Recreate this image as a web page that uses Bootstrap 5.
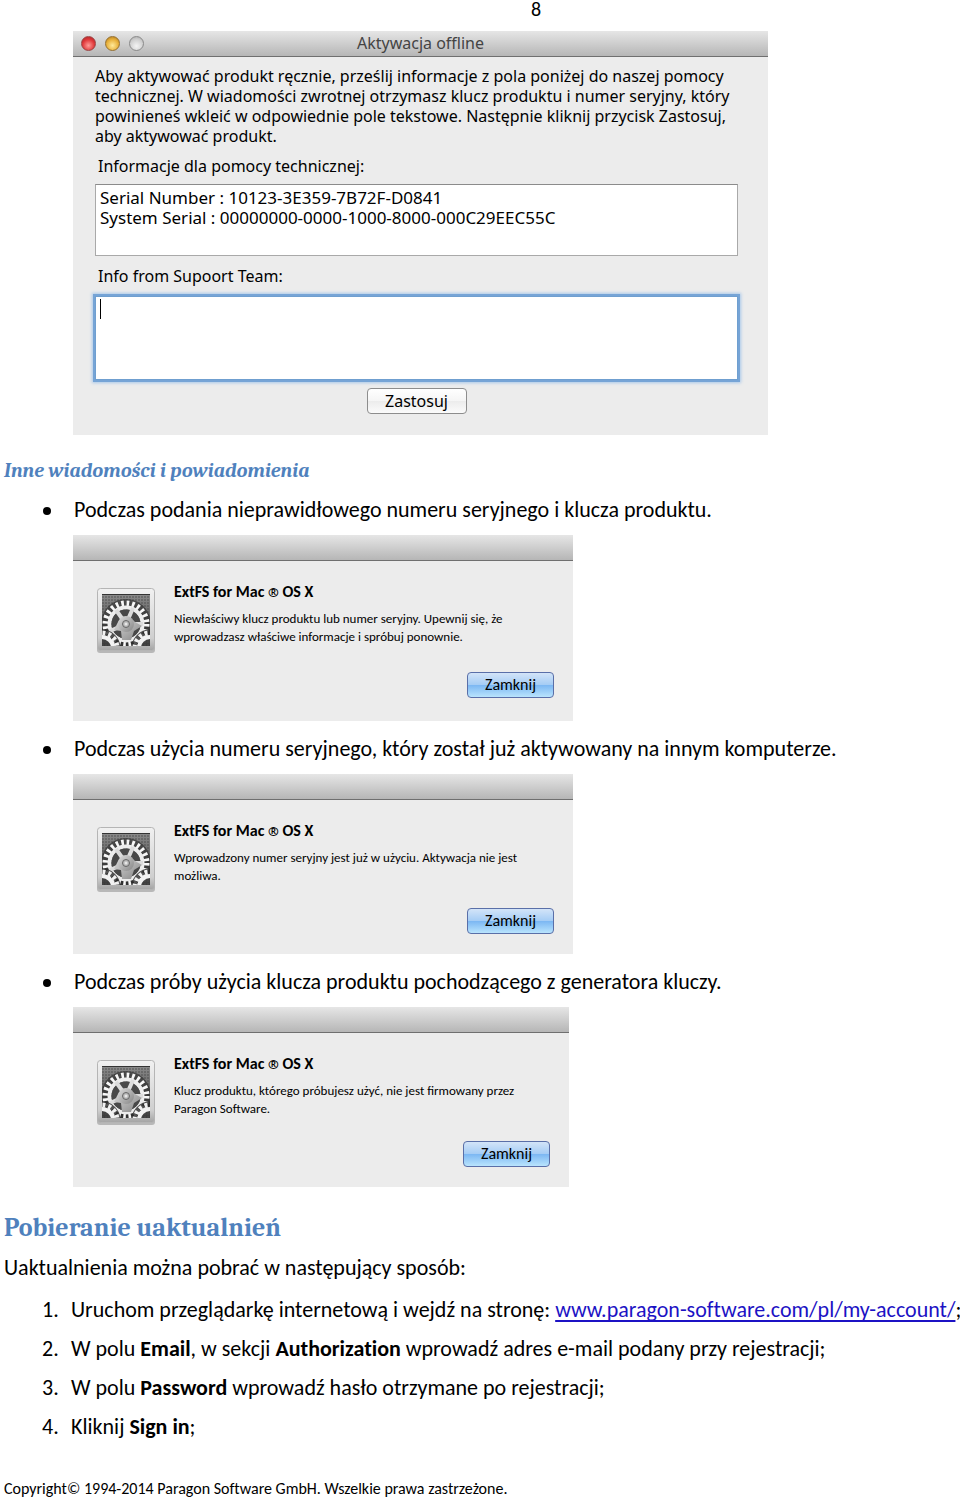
<!DOCTYPE html>
<html lang="pl">
<head>
<meta charset="utf-8">
<meta name="viewport" content="width=device-width, initial-scale=1">
<title>Aktywacja offline</title>
<link href="https://cdn.jsdelivr.net/npm/bootstrap@5.3.0/dist/css/bootstrap.min.css" rel="stylesheet">
<style>
  body { font-family: Carlito, Calibri, Lato, sans-serif; font-size: 22px; line-height: 26px; color: #000; background: #fff; font-variant-ligatures: none; }
  h2, h3 { font-family: Caladea, Cambria, "Liberation Serif", serif; font-weight: 700; color: #4f81bd; }
  h2 { font-size: 26px; line-height: 32px; margin: 25px 0 11px; }
  h3 { font-size: 20px; line-height: 24px; font-style: italic; margin: 24px 0 14px; }
  .page-number { padding: 0 0 13px 108px; font-size: 20px; line-height: 18px; }
  .indent { padding-left: 69px; }

  /* Numbered and bulleted lists share one hanging marker column */
  .steps { list-style: none; padding: 0 0 0 38px; margin: 0; counter-reset: step; }
  .steps > li { display: flex; }
  ol.steps > li { counter-increment: step; margin-bottom: 13px; white-space: nowrap; }
  ol.steps > li::before { content: counter(step) "."; flex: 0 0 29px; }
  ul.steps + .indent { padding-top: 12px; }
  .indent + ul.steps { padding-top: 15px; }
  ul.steps > li::before { content: ""; flex: 0 0 8px; height: 8px; margin: 10px 23px 0 1px; border-radius: 50%; background: #000; }
  a { color: #1c12c4; text-underline-offset: 3px; text-decoration-skip-ink: none; }

  .mac-window { background: #ececec; font-variant-ligatures: normal; }
  .mac-title { height: 26px; background: linear-gradient(#e6e6e6, #b6b6b6); border-bottom: 1px solid #6f6f6f; color: #444; font-size: 16px; line-height: 25px; }
  .activation { max-width: 695px; font-family: "Noto Sans", "Open Sans", sans-serif; font-size: 16px; line-height: 20px; }
  .activation .mac-body { padding: 9px 30px 21px 22px; }
  .activation label { display: block; padding: 2px 0 0 3px; margin-bottom: 8px; }
  .lights { position: absolute; left: 8px; top: 5px; gap: 9px; }
  .light { width: 15px; height: 15px; border-radius: 50%; border: 1px solid #8a8a8a; }
  .light-red { background: radial-gradient(circle at 50% 65%, #ff9c98, #e0393b 55%, #a51f22); border-color: #9d4444; }
  .light-yellow { background: radial-gradient(circle at 50% 65%, #ffe99a, #e8b13c 55%, #a87318); border-color: #96702f; }
  .light-gray { background: radial-gradient(circle at 50% 70%, #f4f4f4, #cfcfcf 60%, #a5a5a5); }
  .mac-field { display: block; width: 100%; height: 72px; resize: none; border: 1px solid #a9a9a9; border-top-color: #8b8b8b; border-radius: 0; padding: 3px 4px; background: #fff; color: #000; outline: 0; overflow: hidden; line-height: 20px; font-size: 17px; }
  .mac-field.active { height: 84px; border: 1px solid #6f9fd0; box-shadow: 0 0 0 2px #76a4d6, 0 0 3px 3px #a9c8ea; }
  .reply-box { margin: 10px 0 8px; }
  .caret { position: absolute; left: 5px; top: 3px; width: 1px; height: 20px; background: #000; }
  .mac-btn { border: 1px solid #8d8d8d; border-radius: 4px; padding: 0; height: 26px; line-height: 22px; font-size: 16px; color: #000; background: linear-gradient(#fff, #f5f5f5 50%, #ececec 51%, #fbfbfb); min-width: 100px; vertical-align: top; }
  .mac-btn.blue { min-width: 87px; border-color: #5a6fa8; background: linear-gradient(#d3e4f8, #a6cdf5 48%, #7db8f3 52%, #b9e4fd); }

  .notice { max-width: 500px; font-size: 13px; line-height: 18px; }
  .notice.narrow { max-width: 496px; }
  .notice .mac-body { padding: 21px 19px 23px 23px; }
  .notice strong { display: block; font-size: 16px; line-height: 20px; margin-bottom: 8px; }
  .notice .reg { font-family: "Noto Sans", sans-serif; font-size: 13px; }
  .notice .icon { width: 60px; height: 68px; margin: 5px 18px 0 0; flex: none; }
  .notice .actions { margin-top: 17px; }
  .notice.short .mac-body { padding-bottom: 20px; }
  .notice.short .actions { margin-top: 14px; }
  footer { font-size: 16px; line-height: 18px; margin-top: 40px; }
</style>
</head>
<body>
<svg width="0" height="0" class="position-absolute" aria-hidden="true">
  <defs>
    <linearGradient id="frame" x1="0" y1="0" x2="0" y2="1"><stop offset="0" stop-color="#f1f1f1"/><stop offset=".8" stop-color="#cfcfcf"/><stop offset="1" stop-color="#a4a4a4"/></linearGradient>
    <linearGradient id="hub" x1="0" y1="0" x2="1" y2="1"><stop offset="0" stop-color="#dedede"/><stop offset="1" stop-color="#858585"/></linearGradient>
    <linearGradient id="back" x1="0" y1="0" x2="0" y2="1"><stop offset="0" stop-color="#8a8a8a"/><stop offset="1" stop-color="#3a3a3a"/></linearGradient>
    <pattern id="mesh" width="3" height="3" patternUnits="userSpaceOnUse"><circle cx="1" cy="1" r=".8" fill="#4a4a4a"/></pattern>
    <clipPath id="inside"><rect x="6" y="7" width="48" height="52"/></clipPath>
    <symbol id="gears" viewBox="0 0 60 68">
      <rect x="1" y="3" width="58" height="63" rx="3" fill="#b8b8b8"/>
      <rect x="1.500" y="1.500" width="57" height="62" rx="3" fill="url(#frame)" stroke="#b5b5b5"/>
      <rect x="6" y="7" width="48" height="52" fill="url(#back)"/>
      <rect x="6" y="7" width="48" height="52" fill="url(#mesh)"/>
      <path d="M6 7.500H54" stroke="#333"/>
      <g clip-path="url(#inside)" fill="none">
        <circle cx="30" cy="37" r="20" stroke="#2a2a2a" stroke-width="10" opacity=".6"/>
        <circle cx="30" cy="37" r="20.500" stroke="#f8f8f8" stroke-width="6" stroke-dasharray="2.600 2.767"/>
        <circle cx="30" cy="37" r="16.500" stroke="#ededed" stroke-width="4"/>
        <circle cx="30" cy="37" r="14.500" fill="#484848"/>
        <circle cx="30" cy="37" r="14.500" fill="url(#mesh)"/>
        <g stroke="#dcdcdc" stroke-width="4">
          <path d="M30 37L20 23M30 37L37 21M30 37L47 37M30 37L14 44"/>
        </g>
        <path d="M22 35Q30 25 39 35L46 39L38 44L35 53H26L25 44L18 43Z" fill="url(#hub)"/>
        <g stroke="#f2f2f2">
          <circle cx="6" cy="61" r="16" stroke="#2a2a2a" stroke-width="5" opacity=".8"/>
          <circle cx="54" cy="61" r="16" stroke="#2a2a2a" stroke-width="5" opacity=".8"/>
          <circle cx="6" cy="61" r="15" stroke-width="5" stroke-dasharray="2.900 2.990"/>
          <circle cx="6" cy="61" r="11" stroke-width="4"/>
          <circle cx="54" cy="61" r="15" stroke-width="5" stroke-dasharray="2.900 2.990"/>
          <circle cx="54" cy="61" r="11" stroke-width="4"/>
        </g>
        <circle cx="30" cy="37" r="8" fill="url(#hub)"/>
        <circle cx="30" cy="37" r="3.500" fill="#b8b8b8" stroke="#666"/>
        <circle cx="30" cy="37" r="1.500" fill="#e6e6e6"/>
      </g>
    </symbol>
  </defs>
</svg>

<main class="container-fluid ps-1 pe-0">
  <div class="page-number text-center">8</div>

  <div class="indent">
    <section class="mac-window activation">
      <div class="mac-title position-relative text-center">
        <div class="lights d-flex"><span class="light light-red"></span><span class="light light-yellow"></span><span class="light light-gray"></span></div>
        Aktywacja offline
      </div>
      <div class="mac-body">
        <p class="mb-2">Aby aktywować produkt ręcznie, prześlij informacje z pola poniżej do naszej pomocy<br>technicznej. W wiadomości zwrotnej otrzymasz klucz produktu i numer seryjny, który<br>powinieneś wkleić w odpowiednie pole tekstowe. Następnie kliknij przycisk Zastosuj,<br>aby aktywować produkt.</p>
        <label for="info">Informacje dla pomocy technicznej:</label>
        <textarea id="info" class="mac-field mb-2" readonly>Serial Number : 10123-3E359-7B72F-D0841
System Serial : 00000000-0000-1000-8000-000C29EEC55C</textarea>
        <label for="reply">Info from Supoort Team:</label>
        <div class="position-relative reply-box"><textarea id="reply" class="mac-field active"></textarea><span class="caret"></span></div>
        <div class="text-center"><button type="button" class="mac-btn">Zastosuj</button></div>
      </div>
    </section>
  </div>

  <h3>Inne wiadomości i powiadomienia</h3>

  <ul class="steps">
    <li>Podczas podania nieprawidłowego numeru seryjnego i klucza produktu.</li>
  </ul>
  <div class="indent">
    <section class="mac-window notice">
      <div class="mac-title"></div>
      <div class="mac-body">
        <div class="d-flex">
          <svg class="icon" aria-hidden="true"><use href="#gears"/></svg>
          <div><strong>ExtFS for Mac <span class="reg">®</span> OS X</strong>Niewłaściwy klucz produktu lub numer seryjny. Upewnij się, że<br>wprowadzasz właściwe informacje i spróbuj ponownie.</div>
        </div>
        <div class="actions text-end"><button type="button" class="mac-btn blue">Zamknij</button></div>
      </div>
    </section>
  </div>

  <ul class="steps">
    <li>Podczas użycia numeru seryjnego, który został już aktywowany na innym komputerze.</li>
  </ul>
  <div class="indent">
    <section class="mac-window notice short">
      <div class="mac-title"></div>
      <div class="mac-body">
        <div class="d-flex">
          <svg class="icon" aria-hidden="true"><use href="#gears"/></svg>
          <div><strong>ExtFS for Mac <span class="reg">®</span> OS X</strong>Wprowadzony numer seryjny jest już w użyciu. Aktywacja nie jest<br>możliwa.</div>
        </div>
        <div class="actions text-end"><button type="button" class="mac-btn blue">Zamknij</button></div>
      </div>
    </section>
  </div>

  <ul class="steps">
    <li>Podczas próby użycia klucza produktu pochodzącego z generatora kluczy.</li>
  </ul>
  <div class="indent">
    <section class="mac-window notice short narrow">
      <div class="mac-title"></div>
      <div class="mac-body">
        <div class="d-flex">
          <svg class="icon" aria-hidden="true"><use href="#gears"/></svg>
          <div><strong>ExtFS for Mac <span class="reg">®</span> OS X</strong>Klucz produktu, którego próbujesz użyć, nie jest firmowany przez<br>Paragon Software.</div>
        </div>
        <div class="actions text-end"><button type="button" class="mac-btn blue">Zamknij</button></div>
      </div>
    </section>
  </div>

  <h2>Pobieranie uaktualnień</h2>
  <p class="mb-3">Uaktualnienia można pobrać w następujący sposób:</p>
  <ol class="steps">
    <li><span>Uruchom przeglądarkę internetową i wejdź na stronę: <a href="#">www.paragon-software.com/pl/my-account/</a>;</span></li>
    <li><span>W polu <b>Email</b>, w sekcji <b>Authorization</b> wprowadź adres e-mail podany przy rejestracji;</span></li>
    <li><span>W polu <b>Password</b> wprowadź hasło otrzymane po rejestracji;</span></li>
    <li><span>Kliknij <b>Sign in</b>;</span></li>
  </ol>
  <footer>Copyright© 1994-2014 Paragon Software GmbH. Wszelkie prawa zastrzeżone.</footer>
</main>
<script src="https://cdn.jsdelivr.net/npm/bootstrap@5.3.0/dist/js/bootstrap.bundle.min.js"></script>
</body>
</html>
